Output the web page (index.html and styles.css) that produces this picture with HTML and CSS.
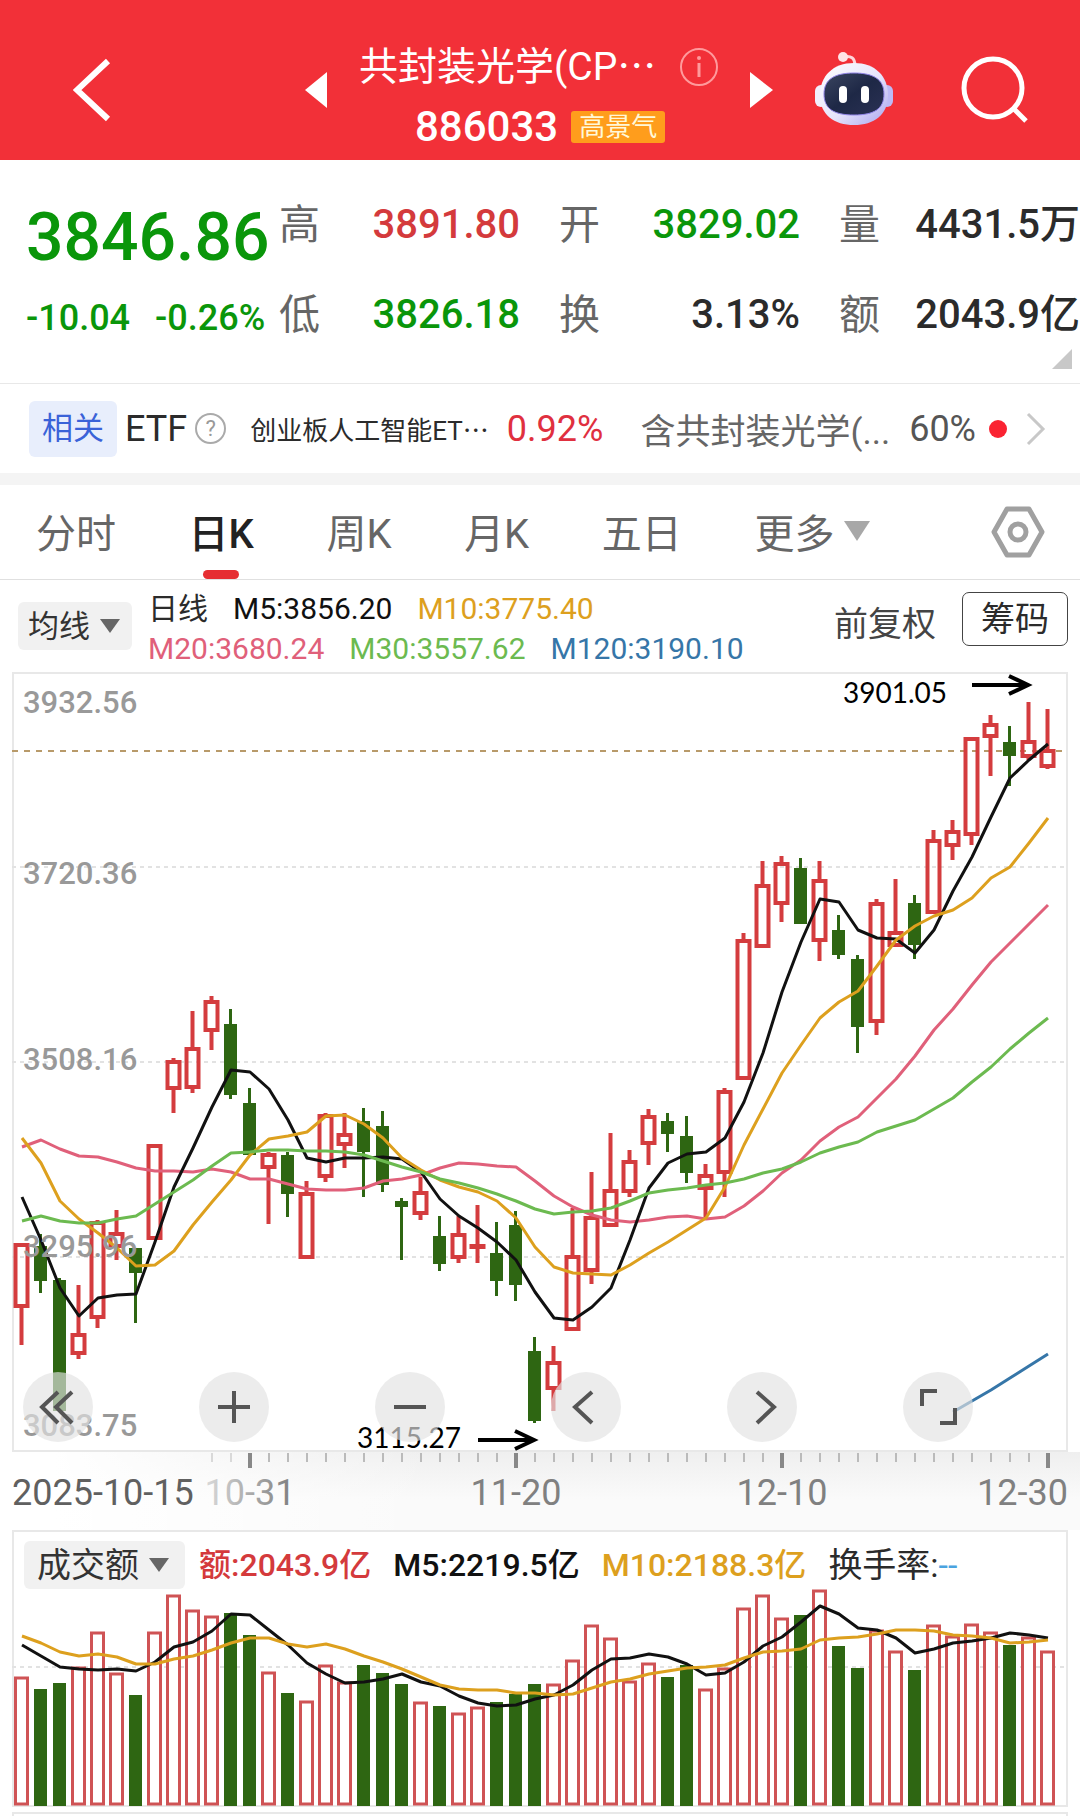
FILE: index.html
```html
<!DOCTYPE html>
<html lang="zh-CN">
<head>
    <meta charset="UTF-8">
    <meta name="viewport" content="width=device-width, initial-scale=1.0">
    <title>共封装光学(CPO) 886033</title>
    <link rel="stylesheet" href="styles.css">
</head>

<body>
    <!-- 顶部标题栏 -->
    <header class="topbar">
        <button class="icon-btn back" aria-label="返回">
            <svg width="38" height="64" viewBox="0 0 38 64"><path d="M35 3 L4 32 L35 61" fill="none" stroke="#fff" stroke-width="6"/></svg>
        </button>
        <div class="switcher">
            <button class="icon-btn" aria-label="上一个">
                <svg width="24" height="36" viewBox="0 0 24 36"><path d="M23 0 V36 L1 18 Z" fill="#fff"/></svg>
            </button>
            <div class="title">
                <h1 class="title-name">共封装光学(CP⋯
                    <svg class="info" width="40" height="40" viewBox="0 0 40 40"><g fill="none" stroke="#ff9a9c" stroke-width="2"><circle cx="20" cy="20" r="18"/><path d="M20 16 V30" stroke-width="3"/></g><circle cx="20" cy="11" r="2" fill="#ff9a9c"/></svg>
                </h1>
                <div class="title-code"><span class="num">886033</span><span class="badge">高景气</span></div>
            </div>
            <button class="icon-btn" aria-label="下一个">
                <svg width="24" height="36" viewBox="0 0 24 36"><path d="M0 0 V36 L23 18 Z" fill="#fff"/></svg>
            </button>
        </div>
        <button class="icon-btn robot" aria-label="智能助手">
            <svg width="80" height="78" viewBox="0 0 80 78">
                <defs>
                    <linearGradient id="shell" x1="0" y1="0" x2="1" y2="1">
                        <stop offset="0" stop-color="#fff"/>
                        <stop offset=".55" stop-color="#e6e4fb"/>
                        <stop offset="1" stop-color="#a9a4ee"/>
                    </linearGradient>
                    <linearGradient id="face" x1="0" y1="0" x2="1" y2="1">
                        <stop offset="0" stop-color="#3a4560"/>
                        <stop offset=".5" stop-color="#1e2846"/>
                        <stop offset="1" stop-color="#2a3154"/>
                    </linearGradient>
                </defs>
                <path d="M29 6 Q41 3 41 15" fill="none" stroke="#ffd5da" stroke-width="3"/>
                <circle cx="29" cy="6" r="5" fill="#ffe3e6"/>
                <rect x="1" y="34" width="12" height="22" rx="6" fill="#f1effc"/>
                <rect x="67" y="34" width="12" height="22" rx="6" fill="#bdbaf5"/>
                <path d="M40 12 C61 12 74 25 74 44 C74 64 60 74 40 74 C20 74 6 64 6 44 C6 25 19 12 40 12 Z" fill="url(#shell)"/>
                <path d="M40 22 C59 22 70 28 70 43 C70 58 60 64 40 64 C20 64 10 58 10 43 C10 28 21 22 40 22 Z" fill="url(#face)" stroke="#8f83e6" stroke-width="1"/>
                <rect x="25" y="35" width="8" height="17" rx="4" fill="#fff"/>
                <rect x="47" y="35" width="8" height="17" rx="4" fill="#fff"/>
            </svg>
        </button>
        <button class="icon-btn search" aria-label="搜索">
            <svg width="68" height="68" viewBox="0 0 68 68"><g fill="none" stroke="#fff" stroke-width="5"><circle cx="32" cy="32" r="29"/><path d="M52 52 L65 65"/></g></svg>
        </button>
    </header>

    <!-- 行情 -->
    <section class="quote">
        <div class="last num down">3846.86</div>
        <div class="cell"><span class="label">高</span><span class="num up">3891.80</span></div>
        <div class="cell"><span class="label">开</span><span class="num down">3829.02</span></div>
        <div class="cell"><span class="label">量</span><span class="num">4431.5万</span></div>
        <div class="change num down"><span>-10.04</span><span>-0.26%</span></div>
        <div class="cell"><span class="label">低</span><span class="num down">3826.18</span></div>
        <div class="cell"><span class="label">换</span><span class="num">3.13%</span></div>
        <div class="cell"><span class="label">额</span><span class="num">2043.9亿</span></div>
        <i class="corner"></i>
    </section>

    <!-- 相关 ETF -->
    <a class="etf" href="#etf">
        <span class="etf-tag">相关</span>
        <span class="etf-word">ETF</span>
        <span class="etf-help">?</span>
        <span class="etf-name">创业板人工智能ET⋯</span>
        <span class="etf-rate">0.92%</span>
        <span class="etf-hold">含共封装光学(...</span>
        <span class="etf-part">60%</span>
        <i class="etf-dot"></i>
        <svg width="20" height="34" viewBox="0 0 20 34"><path d="M2 2 L17 17 L2 32" fill="none" stroke="#c8c8c8" stroke-width="3"/></svg>
    </a>

    <!-- 周期 -->
    <nav class="tabs">
        <button class="tab">分时</button>
        <button class="tab active">日K</button>
        <button class="tab">周K</button>
        <button class="tab">月K</button>
        <button class="tab">五日</button>
        <button class="tab more" aria-haspopup="true">更多<i class="arrow arrow-lg"></i></button>
        <button class="icon-btn setting" aria-label="设置">
            <svg width="54" height="52" viewBox="0 0 54 52"><g fill="none" stroke="#a0a0a0" stroke-width="5" stroke-linejoin="round"><path d="M16 3 H38 L51 26 L38 49 H16 L3 26 Z"/><circle cx="27" cy="26" r="8"/></g></svg>
        </button>
    </nav>

    <!-- 均线 -->
    <section class="ma">
        <div class="picker">
            <select aria-label="主图指标"><option>均线</option></select>
            <i class="arrow"></i>
        </div>
        <div class="ma-values">
            <div><span class="ma-name">日线</span><span class="c5">M5:3856.20</span><span class="c10">M10:3775.40</span></div>
            <div><span class="c20">M20:3680.24</span><span class="c30">M30:3557.62</span><span class="c120">M120:3190.10</span></div>
        </div>
        <span class="adjust">前复权</span>
        <button class="chips">筹码</button>
    </section>

    <!-- K线图 -->
    <section class="chart">
        <svg id="kline" viewBox="0 0 1056 780"></svg>
        <div class="tools">
            <button aria-label="最早"><svg viewBox="0 0 70 70"><path d="M35 20 L19 35 L35 51 M49 20 L33 35 L49 51"/></svg></button>
            <button aria-label="放大"><svg viewBox="0 0 70 70"><path d="M35 19 V51 M19 35 H51"/></svg></button>
            <button aria-label="缩小"><svg viewBox="0 0 70 70"><path d="M19 35 H51"/></svg></button>
            <button aria-label="左移"><svg viewBox="0 0 70 70"><path d="M41 20 L24 35 L41 51"/></svg></button>
            <button aria-label="右移"><svg viewBox="0 0 70 70"><path d="M30 20 L47 35 L30 51"/></svg></button>
            <button aria-label="全屏"><svg viewBox="0 0 70 70"><path d="M34 19 H19 V34 M52 36 V51 H37"/></svg></button>
        </div>
    </section>
    <svg id="dates" class="dates" viewBox="0 0 1056 78"></svg>

    <!-- 成交额 -->
    <section class="volume">
        <div class="volume-head">
            <div class="picker">
                <select aria-label="副图指标"><option>成交额</option></select>
                <i class="arrow"></i>
            </div>
            <span class="up">额:2043.9亿</span>
            <span class="c5">M5:2219.5亿</span>
            <span class="c10">M10:2188.3亿</span>
            <span class="turnover">换手率:<b>--</b></span>
        </div>
        <svg id="volume" viewBox="0 60 1056 217"></svg>
    </section>
    <div class="next-panel"></div>

    <script src="chart.js"></script>
</body>
</html>
```
FILE: styles.css
```css
* {
    box-sizing: border-box;
}

body {
    margin: 0;
    background: #fff;
    color: #2b2b2b;
    font-family: Roboto, "Noto Sans CJK SC", sans-serif;
    overflow-x: hidden;
}

button, select {
    font: inherit;
    color: inherit;
    background: none;
    border: none;
    padding: 0;
    cursor: pointer;
}

svg {
    display: block;
}

.num {
    font-weight: 500;
}

.up { color: #d43a3c; }
.down { color: #0a960a; }
.c5 { color: #111; }
.c10 { color: #dda01e; }
.c20 { color: #e0607a; }
.c30 { color: #6cba50; }
.c120 { color: #3676a8; }

/* 顶部标题栏 */
.topbar {
    display: flex;
    align-items: center;
    height: 160px;
    padding: 20px 51px 0 73px;
    background: #f23038;
    color: #fff;
}

.icon-btn {
    flex: none;
}

.switcher {
    display: flex;
    align-items: center;
    justify-content: space-between;
    width: 470px;
    margin-left: auto;
}

.title {
    width: 360px;
    padding-top: 14px;
}

.title-name {
    display: flex;
    align-items: center;
    justify-content: space-between;
    margin: 0;
    font-size: 39px;
    font-weight: 400;
    line-height: 60px;
}

.title-code {
    display: flex;
    align-items: center;
    gap: 13px;
    padding-left: 56px;
    font-size: 42px;
    line-height: 60px;
}

.badge {
    padding: 0 8px;
    border-radius: 3px;
    background: #ff9d1c;
    color: #fff8d8;
    font-size: 26px;
    line-height: 32px;
}

.robot {
    margin: 0 67px 0 40px;
}

/* 行情 */
.quote {
    position: relative;
    display: grid;
    grid-template-columns: 214px 1fr 1fr 1fr;
    column-gap: 39px;
    grid-template-rows: 90px 90px;
    align-items: center;
    height: 224px;
    padding: 20px 0 0 26px;
    border-bottom: 1px solid #e8e8e8;
    font-size: 40px;
    line-height: 60px;
    white-space: nowrap;
}

.last {
    padding-top: 26px;
    font-size: 66px;
}

.change {
    display: flex;
    gap: 25px;
    padding-top: 6px;
    font-size: 36px;
}

.cell {
    display: flex;
    align-items: center;
    justify-content: space-between;
}

.label {
    color: #666;
    font-size: 41px;
}

.corner {
    position: absolute;
    right: 8px;
    bottom: 14px;
    border-left: 20px solid transparent;
    border-bottom: 20px solid #c8c8c8;
}

/* 相关 ETF */
.etf {
    display: flex;
    align-items: center;
    height: 101px;
    padding: 0 34px 0 29px;
    border-bottom: 12px solid #f4f4f4;
    color: #2b2b2b;
    text-decoration: none;
    white-space: nowrap;
}

.etf-tag {
    padding: 0 13px;
    border-radius: 6px;
    background: #e8eefc;
    color: #3a62d8;
    font-size: 31px;
    line-height: 56px;
}

.etf-word {
    margin: 0 8px;
    font-size: 36px;
}

.etf-help {
    width: 31px;
    height: 31px;
    border: 2px solid #aaa;
    border-radius: 50%;
    color: #999;
    font-size: 22px;
    line-height: 27px;
    text-align: center;
}

.etf-name {
    margin-left: 24px;
    font-size: 26px;
}

.etf-rate {
    margin-left: 18px;
    color: #e0303f;
    font-size: 36px;
}

.etf-hold {
    margin-left: auto;
    color: #666;
    font-size: 35px;
}

.etf-part {
    margin: 0 13px 0 19px;
    color: #555;
    font-size: 36px;
}

.etf-dot {
    width: 18px;
    height: 18px;
    margin-right: 19px;
    border-radius: 50%;
    background: #fa2332;
}

/* 周期 */
.tabs {
    display: flex;
    align-items: center;
    justify-content: space-between;
    height: 95px;
    padding: 0 35px 0 36px;
    border-bottom: 1px solid #e0e0e0;
}

.tab {
    position: relative;
    height: 94px;
    padding-bottom: 2px;
    color: #666;
    font-size: 40px;
}

.tab.active {
    color: #222;
    font-weight: 500;
}

.tab.active::after {
    content: "";
    position: absolute;
    left: 50%;
    bottom: 0;
    width: 36px;
    height: 9px;
    margin-left: -18px;
    border-radius: 5px;
    background: #e62e32;
}

.more {
    display: flex;
    align-items: center;
    gap: 10px;
}

.setting {
    margin-left: 48px;
}

.arrow {
    border: 10px solid transparent;
    border-top: 14px solid #666;
    border-bottom: none;
}

.arrow-lg {
    border-width: 20px 13px 0;
    border-top-color: #a8a8a8;
}

/* 下拉框 */
.picker {
    display: flex;
    align-items: center;
    position: relative;
    height: 48px;
    border-radius: 6px;
    background: #f1f1f1;
    color: #333;
}

.picker select {
    appearance: none;
    height: 48px;
    padding: 0 42px 0 10px;
    font-size: 31px;
}

.picker .arrow {
    position: absolute;
    right: 12px;
    pointer-events: none;
}

/* 均线 */
.ma {
    display: flex;
    align-items: center;
    height: 92px;
    padding: 0 12px 0 18px;
}

.ma-values {
    margin: 0 auto 0 16px;
    padding-top: 6px;
    font-size: 30px;
    line-height: 40px;
}

.ma-values div {
    display: flex;
    gap: 25px;
}

.adjust {
    margin: 0 26px 10px 0;
    color: #444;
    font-size: 34px;
}

.chips {
    width: 106px;
    height: 54px;
    margin-bottom: 14px;
    border: 1px solid #444;
    border-radius: 7px;
    font-size: 34px;
    line-height: 50px;
}

/* K线图 */
.chart {
    position: relative;
    margin: 0 12px;
}

.chart svg,
.dates,
.volume svg {
    width: 100%;
}

.tools {
    position: absolute;
    left: 0;
    right: 0;
    bottom: 10px;
    display: flex;
    justify-content: space-between;
    padding: 0 95px 0 11px;
}

.tools button {
    width: 70px;
    height: 70px;
    border-radius: 50%;
    background: rgba(226, 226, 226, 0.66);
}

.tools path {
    fill: none;
    stroke: #555;
    stroke-width: 4;
}

.dates {
    padding: 0 12px;
    background: linear-gradient(90deg, #fff 5%, transparent 40%), linear-gradient(#efefef, #fafafa 60%);
}

/* 成交额 */
.volume {
    margin: 0 12px;
    box-shadow: inset 0 0 0 2px #e8e8e8;
}

.volume svg {
    overflow: visible;
}

.volume-head {
    display: flex;
    align-items: center;
    height: 60px;
    padding: 10px 12px 0;
    font-size: 32px;
    font-weight: 500;
    line-height: 48px;
    white-space: nowrap;
}

.volume-head > span {
    margin-right: 22px;
}

.volume-head .picker {
    margin-right: 14px;
    font-weight: 400;
}

.volume-head select {
    padding: 0 46px 0 13px;
    font-size: 34px;
}

.volume-head .picker .arrow {
    right: 16px;
}

.volume-head .turnover {
    font-size: 34px;
    font-weight: 400;
}

.turnover b {
    color: #4aa3df;
    font-weight: 400;
}

.next-panel {
    height: 4px;
    margin: 5px 12px 0;
    border: 2px solid #e8e8e8;
    border-bottom: none;
}

/* 图表元素 */
.grid {
    stroke: #e2e2e2;
    stroke-width: 2;
    stroke-dasharray: 4 4;
}

.price-line {
    stroke: #b89a6a;
    stroke-width: 2;
    stroke-dasharray: 6 6;
}

.frame {
    fill: none;
    stroke: #e8e8e8;
    stroke-width: 2;
}

.axis-text {
    fill: #999;
    font-size: 31px;
    font-weight: 500;
}

.mark-text {
    fill: #000;
    font-family: Lato, sans-serif;
    font-size: 28px;
}

.mark-line {
    fill: none;
    stroke: #000;
    stroke-width: 4;
}

.date-text {
    fill: #808080;
    font-size: 36px;
    text-anchor: middle;
}

.date-text.first {
    fill: #606060;
    text-anchor: start;
}

.date-text.last {
    text-anchor: end;
}

.line {
    fill: none;
    stroke-width: 3;
    stroke-linejoin: round;
}
```
FILE: chart.js
```js
const RED = '#d43c3e';
const GREEN = '#2e6612';
const STEP = 19;

// [涨跌, 最高, 实体上, 实体下, 最低]
const candles = [
    [1,571,571,636,673],[0,562,574,609,621],[0,606,608,739,739],[1,613,661,683,687],[1,548,549,647,656],
    [1,538,560,576,588],[0,576,576,601,651],[1,472,472,568,568],[1,386,388,418,441],[1,339,375,417,421],
    [1,324,328,360,378],[0,337,352,423,427],[0,416,431,483,483],[1,480,481,497,552],[0,480,483,522,545],
    [1,509,520,587,587],[1,441,442,506,510],[1,441,461,474,496],[0,436,449,480,525],[0,439,454,513,520],
    [0,526,529,535,588],[1,505,519,543,548],[0,544,564,592,599],[1,544,561,587,591],[1,533,572,577,591],
    [0,550,581,609,624],[0,539,553,613,629],[0,665,679,749,751],[1,674,689,718,739],[1,536,583,659,659],
    [1,500,544,600,612],[1,461,517,555,555],[1,478,488,521,525],[1,437,443,473,493],[0,441,449,462,480],
    [0,444,464,501,511],[1,492,502,518,545],[1,416,418,502,525],[1,261,267,408,408],[1,189,212,276,276],
    [1,184,190,233,250],[0,186,196,252,252],[1,189,207,270,289],[0,243,258,283,287],[0,283,287,355,381],
    [1,227,230,351,363],[1,207,259,275,275],[0,223,231,273,287],[1,158,167,242,242],[1,148,158,175,188],
    [1,65,65,164,173],[1,43,51,66,104],[0,54,70,84,114],[1,30,68,86,88],[1,37,77,96,97]
];

const ma = {
    '#e0607a': [475,468,477,484,485,490,496,499,499,500,497,500,507,507,512,517,518,518,516,509,507,503,496,491,492,494,495,509,524,535,543,548,550,548,545,544,547,545,534,519,501,488,469,455,445,426,407,384,358,337,313,290,271,252,233],
    '#111': [525,568,616,644,626,623,622,570,515,476,435,398,400,417,448,486,490,486,486,485,487,500,527,544,556,570,588,620,646,648,635,616,568,516,491,482,480,466,430,381,320,270,227,230,258,266,267,281,258,219,185,145,106,88,72],
    '#dda01e': [466,491,529,547,561,576,594,593,579,553,530,508,483,467,464,460,444,443,452,466,486,498,508,515,520,529,546,575,595,601,602,603,593,581,570,558,546,515,473,437,401,373,346,330,319,294,268,254,244,238,226,206,195,171,146],
    '#6cba50': [549,544,549,551,551,547,544,532,520,508,494,481,480,478,478,479,479,480,483,489,495,500,507,511,516,522,529,537,542,540,539,536,529,521,518,516,513,511,507,501,497,490,481,475,470,460,454,448,437,426,410,395,377,361,346]
};
const ma120 = [740,729,718,706,694,682];

// [涨跌, 柱顶]
const volumes = [
    [1,147],[0,159],[0,153],[1,137],[1,102],[1,143],[0,165],[1,102],[1,65],[1,80],[1,86],
    [0,83],[0,105],[1,142],[0,163],[1,171],[1,135],[1,152],[0,135],[0,143],[0,154],[1,172],
    [0,176],[1,183],[1,177],[0,172],[0,164],[0,154],[1,154],[1,130],[1,95],[1,108],[1,151],
    [1,133],[0,147],[0,135],[1,159],[1,138],[1,78],[1,65],[1,88],[0,85],[1,60],[0,116],
    [0,138],[1,100],[1,121],[0,140],[1,95],[1,106],[1,94],[1,102],[0,115],[1,107],[1,121]
];
const vol5 = [115,126,137,139,140,139,141,132,117,112,101,84,85,100,115,133,144,153,152,149,144,152,156,166,173,176,175,169,165,155,140,129,128,124,127,134,145,143,132,116,107,92,76,84,98,100,108,123,119,113,111,108,103,105,108];
const vol10 = [106,113,122,126,124,127,134,134,129,126,120,113,108,108,114,117,114,119,126,132,139,147,155,159,160,160,163,163,165,164,158,152,149,144,141,138,137,135,128,122,121,119,110,108,107,104,100,100,101,105,106,108,113,112,110];

function line(values, color, start = 0) {
    const points = values.map((y, i) => `${10 + (start + i) * STEP},${y}`).join(' ');
    return `<polyline class="line" stroke="${color}" points="${points}"/>`;
}

function hline(y, cls) {
    return `<line class="${cls}" x1="0" y1="${y}" x2="1056" y2="${y}"/>`;
}

// 主图
let k = '<rect class="frame" x="1" y="1" width="1054" height="778"/>';
[195, 390, 585].forEach(y => k += hline(y, 'grid'));
k += hline(79, 'price-line');
candles.forEach(([up, high, top, bottom, low], i) => {
    const x = 9.5 + i * STEP;
    if (up) {
        k += `<path d="M${x} ${high}V${top + 2}M${x} ${bottom - 2}V${low}" stroke="${RED}" stroke-width="4"/>`;
        k += `<rect x="${x - 6}" y="${top + 2}" width="12" height="${bottom - top - 4}" fill="none" stroke="${RED}" stroke-width="4"/>`;
    } else {
        k += `<path d="M${x} ${high}V${low}" stroke="${GREEN}" stroke-width="3"/>`;
        k += `<rect x="${x - 6.5}" y="${top}" width="13" height="${bottom - top}" fill="${GREEN}"/>`;
    }
});
for (const color in ma) k += line(ma[color], color);
k += line(ma120, '#3676a8', 49);
[[41, '3932.56'], [212, '3720.36'], [398, '3508.16'], [585, '3295.96'], [764, '3083.75']].forEach(([y, t]) => {
    k += `<text class="axis-text" x="11" y="${y}">${t}</text>`;
});
k += '<text class="mark-text" x="831" y="31">3901.05</text><path class="mark-line" d="M960 13H1016M997 4L1016 13L997 22"/>';
k += '<text class="mark-text" x="345" y="776">3115.27</text><path class="mark-line" d="M466 768H522M503 759L522 768L503 777"/>';
document.getElementById('kline').innerHTML = k;

// 日期轴
let d = '<defs><linearGradient id="fade" gradientUnits="userSpaceOnUse" x1="190" y1="0" x2="280" y2="0"><stop offset="0" stop-color="#ddd"/><stop offset="1" stop-color="#808080"/></linearGradient></defs>';
for (let i = 10; i < 55; i++) {
    const major = (i - 12) % 14 === 0;
    d += `<path d="M${10 + i * STEP} 1V${major ? 16 : 10}" stroke="${major ? '#888' : '#bbb'}" stroke-width="${major ? 4 : 2}" opacity="${i < 12 ? 0.5 : 1}"/>`;
}
d += '<text class="date-text first" x="0" y="53">2025-10-15</text>';
d += '<text class="date-text" style="fill:url(#fade)" x="238" y="53">10-31</text>';
d += '<text class="date-text" x="504" y="53">11-20</text>';
d += '<text class="date-text" x="770" y="53">12-10</text>';
d += '<text class="date-text last" x="1056" y="53">12-30</text>';
document.getElementById('dates').innerHTML = d;

// 成交额
let v = hline(137, 'grid');
volumes.forEach(([up, top], i) => {
    const x = 9.5 + i * STEP;
    if (up) {
        v += `<rect x="${x - 6}" y="${top + 1}" width="12" height="${273 - top}" fill="#fff" stroke="#cf5355" stroke-width="3"/>`;
    } else {
        v += `<rect x="${x - 6.5}" y="${top}" width="13" height="${276 - top}" fill="${GREEN}"/>`;
    }
});
v += line(vol5, '#111') + line(vol10, '#dda01e');
document.getElementById('volume').innerHTML = v;
```
